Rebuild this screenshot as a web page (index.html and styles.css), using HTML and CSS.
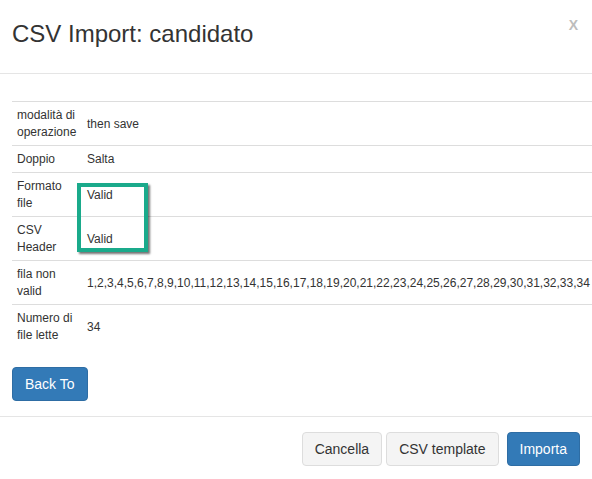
FILE: index.html
```html
<!DOCTYPE html>
<html lang="it">
<head>
<meta charset="utf-8">
<title>CSV Import: candidato</title>
<link rel="stylesheet" href="styles.css">
</head>
<body>
<div class="modal">
  <div class="modal-header">
    <h4 class="modal-title">CSV Import: candidato</h4>
    <button class="close" type="button">X</button>
  </div>
  <div class="modal-body">
    <div class="table-wrap">
      <table class="info-table">
        <tbody>
          <tr><th>modalità di operazione</th><td>then save</td></tr>
          <tr><th>Doppio</th><td>Salta</td></tr>
          <tr><th>Formato file</th><td>Valid</td></tr>
          <tr><th>CSV Header</th><td>Valid</td></tr>
          <tr><th>fila non valid</th><td>1,2,3,4,5,6,7,8,9,10,11,12,13,14,15,16,17,18,19,20,21,22,23,24,25,26,27,28,29,30,31,32,33,34</td></tr>
          <tr><th>Numero di file lette</th><td>34</td></tr>
        </tbody>
      </table>
      <div class="highlight"></div>
    </div>
    <button class="btn btn-primary back" type="button">Back To</button>
  </div>
  <div class="modal-footer">
    <button class="btn btn-default" type="button">Cancella</button>
    <button class="btn btn-default" type="button">CSV template</button>
    <button class="btn btn-primary import" type="button">Importa</button>
  </div>
</div>
</body>
</html>
```
FILE: styles.css
```css
html, body {
  margin: 0;
  padding: 0;
  background: #fff;
  overflow: hidden;
}

body {
  font-family: "Liberation Sans", Arial, sans-serif;
  color: #333;
}

.modal {
  width: 592px;
  height: 479px;
  overflow: hidden;
  background: #fff;
}

.modal-header {
  display: flex;
  justify-content: space-between;
  align-items: flex-start;
  padding: 21px 14px 26px 12px;
  border-bottom: 1px solid #e5e5e5;
}

.modal-title {
  margin: 0;
  font-size: 24px;
  font-weight: normal;
  line-height: 26px;
  color: #333;
}

.close {
  margin-top: -3px;
  padding: 0;
  border: 0;
  background: none;
  font-family: "Liberation Sans", Arial, sans-serif;
  font-size: 14px;
  font-weight: bold;
  line-height: 14px;
  color: #bdbdbd;
}

.modal-body {
  padding: 27px 0 15px 12px;
}

.table-wrap {
  position: relative;
  width: 580px;
}

.info-table {
  width: 580px;
  table-layout: fixed;
  border-collapse: collapse;
  border-spacing: 0;
  font-size: 12px;
  line-height: 17px;
  color: #333;
}

.info-table th,
.info-table td {
  box-sizing: border-box;
  padding: 5px 5px 4px 5px;
  border-top: 1px solid #ddd;
  vertical-align: middle;
  text-align: left;
  font-weight: normal;
}

.info-table th {
  width: 70px;
}

.info-table td {
  white-space: nowrap;
}

.highlight {
  position: absolute;
  left: 65px;
  top: 82px;
  width: 63px;
  height: 61px;
  border: 4px solid #1aaa8b;
  box-shadow: 2px 2px 2px rgba(0, 0, 0, 0.55);
}

.btn {
  display: inline-block;
  box-sizing: border-box;
  height: 34px;
  padding: 6px 12px;
  border: 1px solid transparent;
  border-radius: 4px;
  font-family: "Liberation Sans", Arial, sans-serif;
  font-size: 14px;
  line-height: 20px;
}

.btn-default {
  background: #f4f4f4;
  border-color: #ddd;
  color: #333;
}

.btn-primary {
  background: #337ab7;
  border-color: #2e6da4;
  color: #fff;
}

.back {
  margin-top: 19px;
}

.modal-footer {
  display: flex;
  justify-content: flex-end;
  gap: 4px;
  padding: 15px 12px 12px;
  border-top: 1px solid #e5e5e5;
}

.import {
  margin-left: 4px;
}
```
